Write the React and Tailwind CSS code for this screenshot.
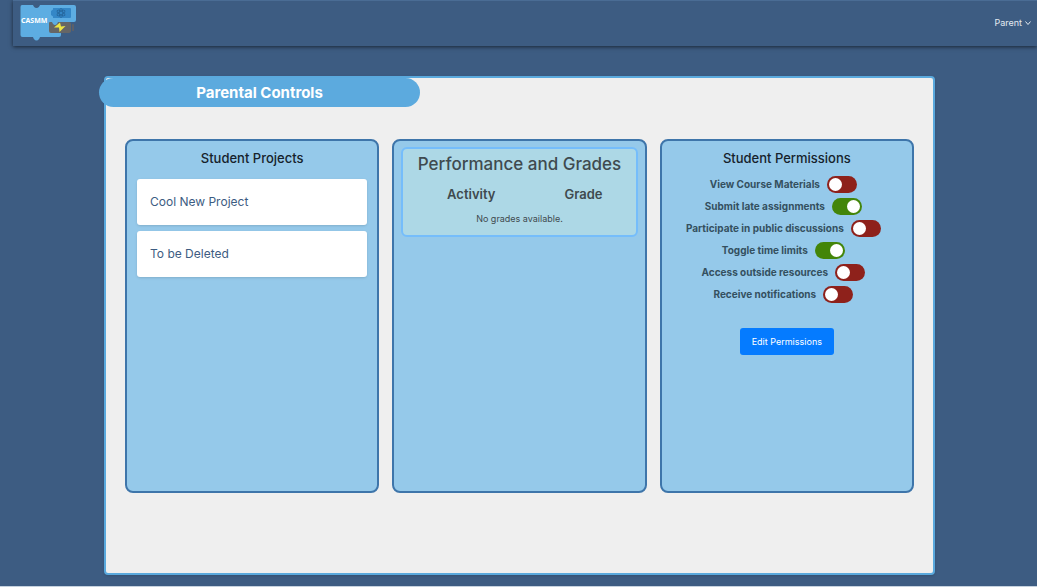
import React, { useState } from "react";

const projects = ["Cool New Project", "To be Deleted"];

const initialPermissions = [
  { id: "materials", label: "View Course Materials", on: false },
  { id: "late", label: "Submit late assignments", on: true },
  { id: "discussions", label: "Participate in public discussions", on: false },
  { id: "limits", label: "Toggle time limits", on: true },
  { id: "resources", label: "Access outside resources", on: false },
  { id: "notifications", label: "Receive notifications", on: false },
];

function Logo() {
  return (
    <svg viewBox="0 0 56 36" className="h-9 w-14" role="img" aria-label="CASMM">
      <path
        d="M2 0H13C13.500 1.500 14.500 3 16.500 3S19.500 1.500 20 0H54Q56 0 56 2V15Q56 17 54 17H38V28H41V30Q41 32 39 32H20C19.500 33.500 18.500 35.500 16.500 35.500S13.500 33.500 13 32H2.500Q0.500 32 0.500 30V2Q0.500 0 2 0Z"
        fill="#5dade2"
      />
      <path d="M33 3H50Q51 3 51 4V12Q51 13 50 13H33V11.500L31 10V6L33 4.500Z" fill="#3487c7" />
      <g fill="none" stroke="#25669c" strokeWidth="0.800">
        <ellipse cx="41" cy="8" rx="4.600" ry="1.800" transform="rotate(30 41 8)" />
        <ellipse cx="41" cy="8" rx="4.600" ry="1.800" transform="rotate(-30 41 8)" />
        <ellipse cx="41" cy="8" rx="1.800" ry="4.600" />
      </g>
      <path
        d="M30 17H32C32.500 18.500 33.500 20 35 20S37.500 18.500 38 17H49Q51 17 51 19V26Q51 28 49 28H31Q29 28 29 26V18Q29 17 30 17Z"
        fill="#666666"
      />
      <rect x="52" y="19" width="2" height="7" rx="0.500" fill="#5c6069" />
      <path d="M40 17.500L34 22.500H39L39.500 27L45.500 21L41 21.500Z" fill="#ece545" />
      <text x="1" y="18" fontSize="7" fontWeight="700" fill="#ffffff" fontFamily="Noto Sans, sans-serif">
        CASMM
      </text>
    </svg>
  );
}

function Panel({ title, children }) {
  return (
    <section className="min-w-0 rounded-lg border-2 border-[#3e75aa] bg-[#95c9ea] px-[10px] pt-[7px]">
      <h2 className="text-center text-[13px] leading-5 font-medium text-[#16222c]">{title}</h2>
      {children}
    </section>
  );
}

function PermissionRow({ item, onToggle }) {
  return (
    <label className="flex h-[22px] items-center justify-center gap-[7px] pr-[7px] text-[10px] font-bold whitespace-nowrap text-[#34505f]">
      {item.label}
      <input type="checkbox" role="switch" checked={item.on} onChange={onToggle} className="peer sr-only" />
      <span className="flex h-[17px] w-[30px] items-center rounded-full bg-[#8e211b] px-[2px] peer-checked:justify-end peer-checked:bg-[#438509]">
        <span className="size-[13px] rounded-full bg-white" />
      </span>
    </label>
  );
}

export default function App() {
  const [permissions, setPermissions] = useState(initialPermissions);
  const toggle = (id) =>
    setPermissions((list) => list.map((p) => (p.id === id ? { ...p, on: !p.on } : p)));

  return (
    <div className="flex min-h-screen flex-col border-b border-[#c5d2df] bg-[#3d5c82] font-['Inter',sans-serif]">
      <header className="ml-[13px] flex h-[46px] items-center justify-between border-t border-[#4a6c94] pr-[6px] pb-[2px] pl-[7px] shadow-[0_1px_4px_rgba(0,0,0,0.6)]">
        <a href="#home">
          <Logo />
        </a>
        <button type="button" className="flex items-center gap-[3px] text-[9px] text-[#e4eaf1]">
          Parent
          <svg viewBox="0 0 6 6" className="size-[6px]" fill="none" stroke="currentColor">
            <path d="M0.500 1.500L3 4.500L5.500 1.500" />
          </svg>
        </button>
      </header>

      <main className="mt-[30px] mr-[102px] mb-[11px] ml-[104px] flex flex-1 flex-col rounded-sm border-2 border-[#5aa9dd] bg-[#efefef] shadow-sm">
        <h1 className="-ml-[7px] w-[321px] rounded-full bg-[#5caade] text-center text-[15px] leading-[29px] font-bold text-white">
          Parental Controls
        </h1>
        <div className="mt-8 grid min-h-[354px] grid-cols-3 gap-[13px] px-[19px]">
          <Panel title="Student Projects">
            <ul className="mt-[11px] flex flex-col gap-[6px]">
              {projects.map((name) => (
                <li
                  key={name}
                  className="rounded-[3px] bg-white px-[13px] text-[12px] leading-[46px] text-[#3d5c82] shadow-sm"
                >
                  {name}
                </li>
              ))}
            </ul>
          </Panel>

          <section className="min-w-0 rounded-lg border-2 border-[#3e75aa] bg-[#95c9ea] px-[7px] py-[6px]">
            <div className="rounded-md border-2 border-[#75bdfb] bg-[#add8e6] px-[4px] pt-[3px] pb-[9px] text-center text-[#3f4a4f]">
              <h2 className="text-[17px] leading-6 font-medium whitespace-nowrap">Performance and Grades</h2>
              <table className="w-full table-fixed">
                <thead>
                  <tr className="text-[13px] leading-9">
                    <th className="w-[57%] font-semibold">Activity</th>
                    <th className="font-semibold">Grade</th>
                  </tr>
                </thead>
                <tbody>
                  <tr>
                    <td colSpan={2} className="text-[9px] leading-[14px]">
                      No grades available.
                    </td>
                  </tr>
                </tbody>
              </table>
            </div>
          </section>

          <Panel title="Student Permissions">
            <div className="mt-[5px]">
              {permissions.map((item) => (
                <PermissionRow key={item.id} item={item} onToggle={() => toggle(item.id)} />
              ))}
            </div>
            <button
              type="button"
              className="mx-auto mt-[23px] block rounded-[3px] bg-[#057bff] px-[12px] text-[9px] leading-[27px] text-white"
            >
              Edit Permissions
            </button>
          </Panel>
        </div>
      </main>
    </div>
  );
}
